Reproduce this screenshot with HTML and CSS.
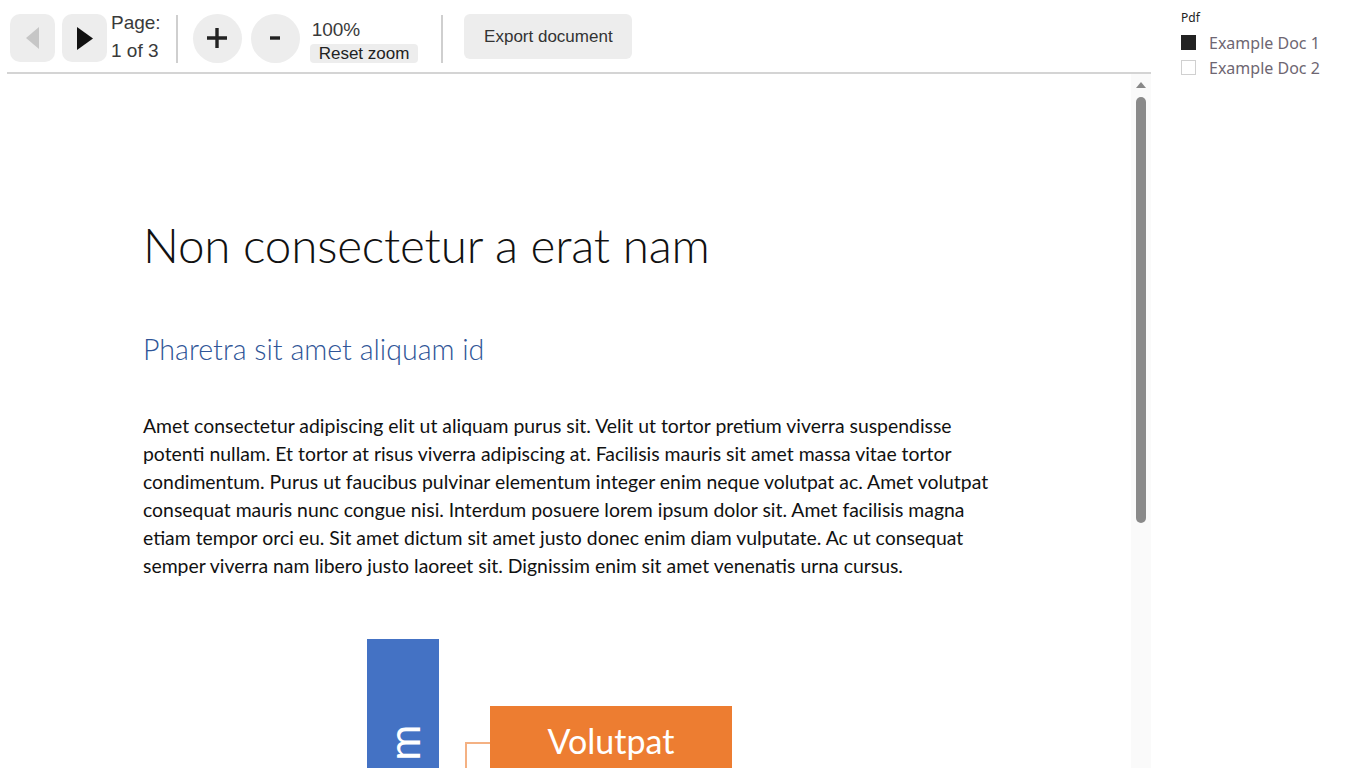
FILE: index.html
```html
<!DOCTYPE html>
<html lang="en">
<head>
    <meta charset="UTF-8">
    <title>Document viewer</title>
    <link rel="stylesheet" href="styles.css">
</head>
<body>
    <div class="app">
        <div class="viewer-panel">
            <div class="toolbar">
                <button class="nav-btn" disabled>
                    <svg width="14" height="22" viewBox="0 0 14 22"><path d="M13 0 L0 11 L13 22 Z" fill="#c6c6c6"/></svg>
                </button>
                <button class="nav-btn">
                    <svg width="16" height="23" viewBox="0 0 16 23"><path d="M0 0 L16 11.5 L0 23 Z" fill="#111"/></svg>
                </button>
                <div class="page-info">
                    <span>Page:</span>
                    <span>1 of 3</span>
                </div>
                <div class="divider"></div>
                <button class="zoom-btn">
                    <svg width="22" height="22" viewBox="0 0 22 22"><path d="M11 1 V21 M1 11 H21" stroke="#222" stroke-width="3.4"/></svg>
                </button>
                <button class="zoom-btn">
                    <svg width="12" height="6" viewBox="0 0 12 6"><path d="M1 3 H11" stroke="#222" stroke-width="3.4"/></svg>
                </button>
                <div class="zoom-info">
                    <span class="zoom-value">100%</span>
                    <button class="reset-btn">Reset zoom</button>
                </div>
                <div class="divider"></div>
                <button class="export-btn">Export document</button>
            </div>

            <div class="viewer">
                <div class="document">
                    <h1>Non consectetur a erat nam</h1>
                    <h2>Pharetra sit amet aliquam id</h2>
                    <p>Amet consectetur adipiscing elit ut aliquam purus sit. Velit ut tortor pretium viverra suspendisse potenti nullam. Et tortor at risus viverra adipiscing at. Facilisis mauris sit amet massa vitae tortor condimentum. Purus ut faucibus pulvinar elementum integer enim neque volutpat ac. Amet volutpat consequat mauris nunc congue nisi. Interdum posuere lorem ipsum dolor sit. Amet facilisis magna etiam tempor orci eu. Sit amet dictum sit amet justo donec enim diam vulputate. Ac ut consequat semper viverra nam libero justo laoreet sit. Dignissim enim sit amet venenatis urna cursus.</p>

                    <div class="diagram">
                        <div class="node node-main"><span>Aliquam</span></div>
                        <div class="connector"></div>
                        <div class="node node-child">Volutpat</div>
                    </div>
                </div>
                <div class="scrollbar">
                    <div class="scroll-arrow"></div>
                    <div class="scroll-thumb"></div>
                </div>
            </div>
        </div>

        <div class="sidebar">
            <div class="sidebar-title">Pdf</div>
            <label class="doc-option">
                <span class="check checked"></span>
                Example Doc 1
            </label>
            <label class="doc-option">
                <span class="check"></span>
                Example Doc 2
            </label>
        </div>
    </div>
</body>
</html>
```

FILE: styles.css
```css
body {
    margin: 0;
    font-family: "Liberation Sans", Arial, sans-serif;
    background-color: white;
    overflow: hidden;
}
.app {
    display: flex;
    height: 100vh;
}
.viewer-panel {
    width: 1144px;
    margin-left: 7px;
    display: flex;
    flex-direction: column;
}
.toolbar {
    display: flex;
    align-items: center;
    height: 48px;
    padding: 14px 0 10px 3px;
    border-bottom: 2px solid #d4d4d4;
}
button {
    font-family: "Liberation Sans", Arial, sans-serif;
    border: none;
    background-color: #ededed;
    color: #333;
    padding: 0;
    cursor: pointer;
}
.nav-btn {
    width: 45px;
    height: 48px;
    border-radius: 10px;
    display: flex;
    align-items: center;
    justify-content: center;
    margin-right: 7px;
}
.nav-btn + .nav-btn {
    margin-right: 4px;
}
.page-info {
    display: flex;
    flex-direction: column;
    font-size: 19px;
    line-height: 28px;
    color: #3a3a3a;
    margin-top: -2px;
}
.divider {
    width: 2px;
    height: 48px;
    background-color: #cfcfcf;
    margin: 2px 15px 0 15px;
}
.zoom-btn {
    width: 49px;
    height: 49px;
    border-radius: 50%;
    display: flex;
    align-items: center;
    justify-content: center;
    margin-right: 9px;
}
.zoom-btn + .zoom-btn {
    margin-right: 10px;
}
.zoom-info {
    display: flex;
    flex-direction: column;
    align-items: flex-start;
    margin-top: 6px;
}
.zoom-value {
    font-size: 19px;
    line-height: 22px;
    color: #3a3a3a;
    padding-left: 2px;
}
.reset-btn {
    font-size: 17px;
    line-height: 19px;
    padding: 0 9px;
    border-radius: 4px;
    color: #222;
    margin-top: 3px;
}
.zoom-info + .divider {
    margin-left: 23px;
    margin-right: 21px;
}
.export-btn {
    height: 45px;
    width: 168px;
    border-radius: 6px;
    font-size: 17px;
    margin-top: -3px;
}
.viewer {
    flex: 1;
    display: flex;
    overflow: hidden;
}
.document {
    flex: 1;
    overflow: hidden;
    padding: 143px 0 0 136px;
    font-family: Lato, "Liberation Sans", sans-serif;
}
h1 {
    font-weight: 300;
    font-size: 47.6px;
    letter-spacing: -0.2px;
    line-height: 56px;
    margin: 0;
    color: #111;
}
h2 {
    font-weight: 300;
    font-size: 28.6px;
    line-height: 32px;
    margin: 60px 0 0;
    color: #2f5597;
}
p {
    width: 862px;
    font-size: 19.4px;
    line-height: 28px;
    margin: 47px 0 0;
    color: #111;
}
.diagram {
    position: relative;
    height: 200px;
    margin-top: 59px;
}
.node {
    position: absolute;
    color: white;
    display: flex;
    align-items: center;
    justify-content: center;
}
.node-main {
    left: 224px;
    top: 0;
    width: 72px;
    height: 300px;
    background-color: #4472c4;
}
.node-main span {
    font-size: 44px;
    letter-spacing: 5px;
    transform: rotate(-90deg);
    white-space: nowrap;
    margin-top: 53px;
}
.node-child {
    left: 347px;
    top: 67px;
    width: 242px;
    height: 120px;
    background-color: #ed7d31;
    font-size: 34px;
    align-items: flex-start;
    padding-top: 14px;
    box-sizing: border-box;
}
.connector {
    position: absolute;
    left: 322px;
    top: 103px;
    width: 25px;
    height: 100px;
    border-top: 2px solid #f4b183;
    border-left: 2px solid #f4b183;
}
.scrollbar {
    width: 20px;
    background-color: #fafafa;
    display: flex;
    flex-direction: column;
    align-items: center;
}
.scroll-arrow {
    width: 0;
    height: 0;
    border-left: 5px solid transparent;
    border-right: 5px solid transparent;
    border-bottom: 6px solid #888;
    margin-top: 8px;
}
.scroll-thumb {
    width: 10px;
    height: 426px;
    border-radius: 5px;
    background-color: #8a8a8a;
    margin-top: 9px;
}
.sidebar {
    padding: 9px 0 0 30px;
    font-family: "Noto Sans", sans-serif;
}
.sidebar-title {
    font-size: 12px;
    color: #222;
    margin-bottom: 4px;
}
.doc-option {
    display: flex;
    align-items: center;
    font-size: 16px;
    color: #6e6672;
    height: 25px;
}
.check {
    width: 13px;
    height: 13px;
    border: 1px solid #d0d0d0;
    margin-right: 13px;
}
.check.checked {
    background-color: #222;
    border-color: #222;
}
```
